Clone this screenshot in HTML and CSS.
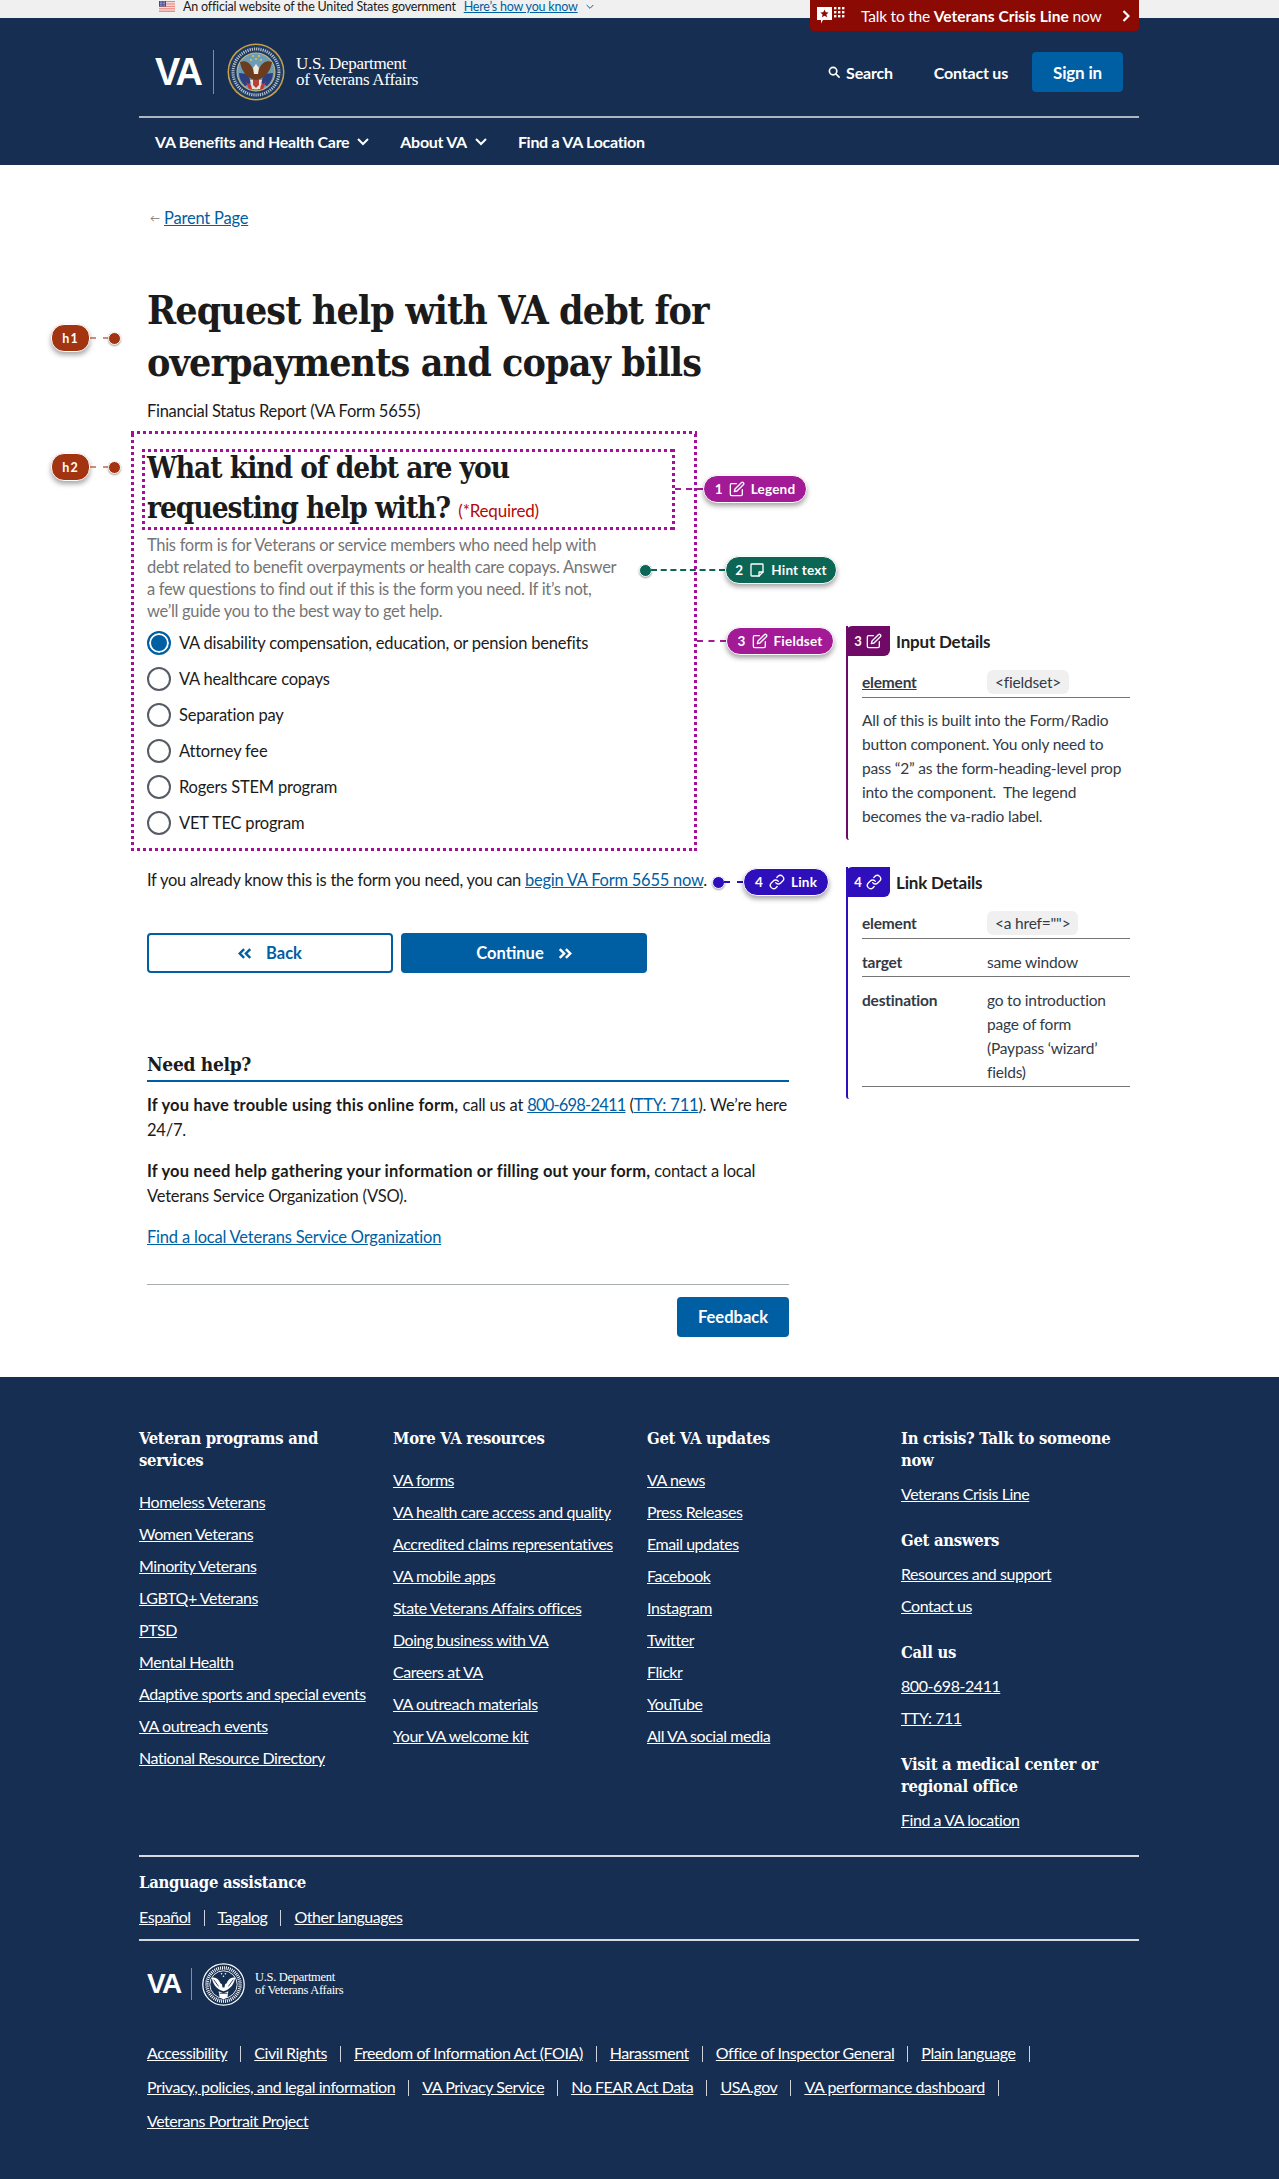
FILE: index.html
```html
<!DOCTYPE html>
<html lang="en">
<head>
  <meta charset="UTF-8">
  <title>Request help with VA debt</title>
  <link rel="stylesheet" href="styles.css">
</head>
<body>
  <svg class="sprite" width="0" height="0" aria-hidden="true">
    <symbol id="i-edit" viewBox="0 0 24 24"><path d="M11 4H4a2 2 0 0 0-2 2v14a2 2 0 0 0 2 2h14a2 2 0 0 0 2-2v-7"/><path d="M18.5 2.5a2.12 2.12 0 0 1 3 3L12 15l-4 1 1-4z"/></symbol>
    <symbol id="i-note" viewBox="0 0 24 24"><path d="M4 3h16a1 1 0 0 1 1 1v11l-6 6H4a1 1 0 0 1-1-1V4a1 1 0 0 1 1-1z"/><path d="M21 15h-6v6"/></symbol>
    <symbol id="i-link" viewBox="0 0 24 24"><path d="M10 13a5 5 0 0 0 7.54.54l3-3a5 5 0 0 0-7.07-7.07l-1.72 1.71"/><path d="M14 11a5 5 0 0 0-7.54-.54l-3 3a5 5 0 0 0 7.07 7.07l1.71-1.71"/></symbol>
    <symbol id="i-dbl-left" viewBox="0 0 16 12"><path d="M7 1 2 6l5 5M14 1 9 6l5 5"/></symbol>
    <symbol id="i-dbl-right" viewBox="0 0 16 12"><path d="m2 1 5 5-5 5M9 1l5 5-5 5"/></symbol>
    <symbol id="i-down" viewBox="0 0 12 8"><path d="m1 1 5 5 5-5"/></symbol>
  </svg>

  <div class="gov-banner">
    <div class="gov-inner">
      <svg class="flag" viewBox="0 0 16 11">
        <rect width="16" height="11" fill="#fff"/>
        <path d="M0 .5h16M0 2.2h16M0 3.9h16M0 5.6h16M0 7.3h16M0 9h16M0 10.6h16" stroke="#e2746a" stroke-width=".9"/>
        <rect width="7" height="5.6" fill="#3f4d8f"/>
        <path d="M1 1h5M1 2.6h5M1 4.2h5" stroke="#fff" stroke-width=".7" stroke-dasharray=".7 .7"/>
      </svg>
      <span>An official website of the United States government</span>
      <a href="#" class="gov-link">Here’s how you know</a>
      <svg class="gov-chev"><use href="#i-down"/></svg>
    </div>
  </div>

  <header class="site-header">
    <div class="header-wrap">
      <a href="#" class="crisis-tab">
        <svg class="crisis-icon" viewBox="0 0 30 17">
          <path d="M0 0h15v13H6l-2 3.500V13H0z" fill="#fff"/>
          <path d="m7.500 2.600 1.200 2.700 2.900.2-2.200 1.900.7 2.800-2.600-1.500-2.600 1.500.7-2.800-2.200-1.900 2.900-.2z" fill="#8b0a03"/>
          <g fill="#fff">
            <rect x="17" y="0" width="2.400" height="2.400"/><rect x="21" y="0" width="2.400" height="2.400"/><rect x="25" y="0" width="2.400" height="2.400"/>
            <rect x="17" y="4" width="2.400" height="2.400"/><rect x="21" y="4" width="2.400" height="2.400"/><rect x="25" y="4" width="2.400" height="2.400"/>
            <rect x="17" y="8" width="2.400" height="2.400"/><rect x="21" y="8" width="2.400" height="2.400"/><rect x="25" y="8" width="2.400" height="2.400"/>
          </g>
        </svg>
        <span class="crisis-text">Talk to the <b>Veterans Crisis Line</b> now</span>
        <svg class="crisis-chev" viewBox="0 0 8 12"><path d="m1.500 1 5 5-5 5"/></svg>
      </a>

      <div class="header-top">
        <a href="#" class="logo">
          <span class="logo-va">VA</span>
          <span class="logo-rule"></span>
          <svg class="seal" viewBox="0 0 58 58">
            <circle cx="29" cy="29" r="28.500" fill="#c5a04a"/>
            <circle cx="29" cy="29" r="27" fill="#1d3a63"/>
            <circle cx="29" cy="29" r="19.500" fill="#c9b67a"/>
            <circle cx="29" cy="29" r="18.500" fill="#6d9cb6"/>
            <circle cx="29" cy="29" r="23" fill="none" stroke="#b9c3cf" stroke-width="3" stroke-dasharray="1.200 1"/>
            <path d="M12 30l9 1 3 9-6 3a18 18 0 0 1-6-13zM46 30l-9 1-3 9 6 3a18 18 0 0 0 6-13z" fill="#2c3f80"/>
            <path d="M19 39l8 5 0 3-5-1zM39 39l-8 5 0 3 5-1z" fill="#c6343a"/>
            <path d="M23 37l12 0-2 9h-8z" fill="#e9e4da"/>
            <path d="M26 36l6 0 0 6-3 3-3-3z" fill="#b5423a"/>
            <path d="M13 19c5-2 10 0 13 7l3 1 3-1c3-7 8-9 13-7-1 7-5 14-12 17l-4 1-4-1c-7-3-11-10-12-17z" fill="#6b3d1e"/>
            <path d="M26 25l3-4 3 4-1 6h-4z" fill="#f0ebdd"/>
            <g fill="#e6c64e"><circle cx="26" cy="13" r="1"/><circle cx="32" cy="13" r="1"/><circle cx="29" cy="16" r="1"/><circle cx="24" cy="17" r="1"/><circle cx="34" cy="17" r="1"/></g>
          </svg>
          <span class="logo-text">U.S. Department<br>of Veterans Affairs</span>
        </a>
        <div class="header-actions">
          <a href="#" class="hdr-link search-link">
            <svg viewBox="0 0 14 14"><circle cx="5.500" cy="5.500" r="4"/><path d="m8.500 8.500 4 4"/></svg>
            Search
          </a>
          <a href="#" class="hdr-link">Contact us</a>
          <a href="#" class="sign-in">Sign in</a>
        </div>
      </div>

      <nav class="main-nav">
        <a href="#">VA Benefits and Health Care<svg class="nav-chev"><use href="#i-down"/></svg></a>
        <a href="#">About VA<svg class="nav-chev"><use href="#i-down"/></svg></a>
        <a href="#">Find a VA Location</a>
      </nav>
    </div>
  </header>

  <main class="page">
    <div class="form-col">
      <p class="parent-line"><span class="back-arrow">←</span><a href="#">Parent Page</a></p>
      <h1>Request help with VA debt for overpayments and copay bills</h1>
      <p class="subtitle">Financial Status Report (VA Form 5655)</p>

      <div class="fieldset dotted-box">
        <div class="legend dotted-box">
          <h2>What kind of debt are you requesting help with? <span class="required">(*Required)</span></h2>
        </div>
        <p class="hint">This form is for Veterans or service members who need help with<br>debt related to benefit overpayments or health care copays. Answer<br>a few questions to find out if this is the form you need. If it’s not,<br>we’ll guide you to the best way to get help.</p>
        <div class="radios">
          <label class="radio"><span class="dot-box checked"></span>VA disability compensation, education, or pension benefits</label>
          <label class="radio"><span class="dot-box"></span>VA healthcare copays</label>
          <label class="radio"><span class="dot-box"></span>Separation pay</label>
          <label class="radio"><span class="dot-box"></span>Attorney fee</label>
          <label class="radio"><span class="dot-box"></span>Rogers STEM program</label>
          <label class="radio"><span class="dot-box"></span>VET TEC program</label>
        </div>
      </div>

      <p class="already">If you already know this is the form you need, you can <a href="#">begin VA Form 5655 now</a>.</p>

      <div class="form-buttons">
        <button class="btn btn-outline"><svg class="dbl"><use href="#i-dbl-left"/></svg>Back</button>
        <button class="btn btn-solid">Continue<svg class="dbl"><use href="#i-dbl-right"/></svg></button>
      </div>

      <section class="need-help">
        <h3>Need help?</h3>
        <p><b>If you have trouble using this online form,</b> call us at <a href="#" class="tel">800-698-2411</a> (<a href="#">TTY: 711</a>). We’re here 24/7.</p>
        <p><b>If you need help gathering your information or filling out your form,</b> contact a local Veterans Service Organization (VSO).</p>
        <p><a href="#">Find a local Veterans Service Organization</a></p>
      </section>

      <div class="feedback-row"><button class="feedback">Feedback</button></div>
    </div>

    <aside class="details-col">
      <div class="panel panel-purple">
        <div class="panel-head">
          <span class="panel-tab">3<svg class="icn"><use href="#i-edit"/></svg></span>
          <h4>Input Details</h4>
        </div>
        <div class="panel-body">
          <div class="row row-first"><b class="underlined">element</b><span><code>&lt;fieldset&gt;</code></span></div>
          <p>All of this is built into the Form/Radio button component. You only need to pass “2” as the form-heading-level prop into the component.&nbsp; The legend becomes the va-radio label.</p>
        </div>
      </div>

      <div class="panel panel-blue">
        <div class="panel-head">
          <span class="panel-tab">4<svg class="icn"><use href="#i-link"/></svg></span>
          <h4>Link Details</h4>
        </div>
        <div class="panel-body">
          <div class="row row-first"><b>element</b><span><code>&lt;a href=""&gt;</code></span></div>
          <div class="row"><b>target</b><span>same window</span></div>
          <div class="row"><b>destination</b><span>go to introduction page of form (Paypass ‘wizard’ fields)</span></div>
        </div>
      </div>
    </aside>

    <div class="pin pin-h1"><span class="pill pill-rust">h1</span><i class="line"></i><i class="dot"></i></div>
    <div class="pin pin-h2"><span class="pill pill-rust">h2</span><i class="line"></i><i class="dot"></i></div>
    <div class="pin pin-legend"><i class="line"></i><span class="pill pill-magenta">1<svg class="icn"><use href="#i-edit"/></svg>Legend</span></div>
    <div class="pin pin-hint"><i class="dot"></i><i class="line"></i><span class="pill pill-teal">2<svg class="icn"><use href="#i-note"/></svg>Hint text</span></div>
    <div class="pin pin-fieldset"><i class="line"></i><span class="pill pill-magenta">3<svg class="icn"><use href="#i-edit"/></svg>Fieldset</span></div>
    <div class="pin pin-link"><i class="dot"></i><i class="line"></i><span class="pill pill-blue">4<svg class="icn"><use href="#i-link"/></svg>Link</span></div>
  </main>

  <footer class="site-footer">
    <div class="footer-wrap">
      <div class="footer-cols">
        <div>
          <h5>Veteran programs and services</h5>
          <ul>
            <li><a href="#">Homeless Veterans</a></li>
            <li><a href="#">Women Veterans</a></li>
            <li><a href="#">Minority Veterans</a></li>
            <li><a href="#">LGBTQ+ Veterans</a></li>
            <li><a href="#">PTSD</a></li>
            <li><a href="#">Mental Health</a></li>
            <li><a href="#">Adaptive sports and special events</a></li>
            <li><a href="#">VA outreach events</a></li>
            <li><a href="#">National Resource Directory</a></li>
          </ul>
        </div>
        <div>
          <h5>More VA resources</h5>
          <ul>
            <li><a href="#">VA forms</a></li>
            <li><a href="#">VA health care access and quality</a></li>
            <li><a href="#">Accredited claims representatives</a></li>
            <li><a href="#">VA mobile apps</a></li>
            <li><a href="#">State Veterans Affairs offices</a></li>
            <li><a href="#">Doing business with VA</a></li>
            <li><a href="#">Careers at VA</a></li>
            <li><a href="#">VA outreach materials</a></li>
            <li><a href="#">Your VA welcome kit</a></li>
          </ul>
        </div>
        <div>
          <h5>Get VA updates</h5>
          <ul>
            <li><a href="#">VA news</a></li>
            <li><a href="#">Press Releases</a></li>
            <li><a href="#">Email updates</a></li>
            <li><a href="#">Facebook</a></li>
            <li><a href="#">Instagram</a></li>
            <li><a href="#">Twitter</a></li>
            <li><a href="#">Flickr</a></li>
            <li><a href="#">YouTube</a></li>
            <li><a href="#">All VA social media</a></li>
          </ul>
        </div>
        <div class="col-stacked">
          <h5>In crisis? Talk to someone now</h5>
          <ul><li><a href="#">Veterans Crisis Line</a></li></ul>
          <h5>Get answers</h5>
          <ul>
            <li><a href="#">Resources and support</a></li>
            <li><a href="#">Contact us</a></li>
          </ul>
          <h5>Call us</h5>
          <ul>
            <li><a href="#">800-698-2411</a></li>
            <li><a href="#">TTY: 711</a></li>
          </ul>
          <h5>Visit a medical center or regional office</h5>
          <ul><li><a href="#">Find a VA location</a></li></ul>
        </div>
      </div>

      <div class="language">
        <h5>Language assistance</h5>
        <p><a href="#">Español</a><i class="sep"></i><a href="#">Tagalog</a><i class="sep"></i><a href="#">Other languages</a></p>
      </div>

      <div class="footer-bottom">
        <div class="footer-logo">
          <span class="logo-va">VA</span>
          <span class="logo-rule"></span>
          <svg class="seal-mono" viewBox="0 0 44 44">
            <circle cx="22" cy="22" r="21.200" fill="none" stroke="#fff" stroke-width="1.300"/>
            <circle cx="22" cy="22" r="17" fill="none" stroke="#fff" stroke-width="3.500" stroke-dasharray="1 1"/>
            <circle cx="22" cy="22" r="14" fill="none" stroke="#fff" stroke-width=".9"/>
            <path d="M10 15c4-1 7 1 9 6l3 1 3-1c2-5 5-7 9-6-1 6-4 10-9 13l-3 1-3-1c-5-3-8-7-9-13z" fill="#fff"/>
            <path d="M17 29l5 2 5-2-1 6-4 2-4-2z" fill="#fff"/>
            <path d="M20 20l2-3 2 3-1 5h-2z" fill="#162e51"/>
            <path d="M12 17l5 7M32 17l-5 7M18 31h8" stroke="#162e51" stroke-width=".9"/>
            <g fill="#fff"><circle cx="20" cy="11" r=".8"/><circle cx="24" cy="11" r=".8"/><circle cx="22" cy="13.500" r=".8"/></g>
          </svg>
          <span class="logo-text">U.S. Department<br>of Veterans Affairs</span>
        </div>
        <div class="bottom-links">
          <p><a href="#">Accessibility</a><i class="sep"></i><a href="#">Civil Rights</a><i class="sep"></i><a href="#">Freedom of Information Act (FOIA)</a><i class="sep"></i><a href="#">Harassment</a><i class="sep"></i><a href="#">Office of Inspector General</a><i class="sep"></i><a href="#">Plain language</a><i class="sep"></i></p>
          <p><a href="#">Privacy, policies, and legal information</a><i class="sep"></i><a href="#">VA Privacy Service</a><i class="sep"></i><a href="#">No FEAR Act Data</a><i class="sep"></i><a href="#">USA.gov</a><i class="sep"></i><a href="#">VA performance dashboard</a><i class="sep"></i></p>
          <p><a href="#">Veterans Portrait Project</a></p>
        </div>
      </div>
    </div>
  </footer>
</body>
</html>
```

FILE: styles.css
```css
* {
  box-sizing: border-box;
}

body {
  margin: 0;
  font-family: "Lato", "Noto Sans", sans-serif;
  font-size: 16px;
  letter-spacing: -0.2px;
  color: #1b1b1b;
  background: #fff;
}

a {
  color: #005ea2;
}

p {
  margin: 0;
}

.sprite {
  position: absolute;
}

/* top banner */
.gov-banner {
  height: 18px;
  background: #f0f0f0;
  font-size: 12.500px;
  line-height: 14px;
}

.gov-inner {
  width: 1000px;
  margin: 0 140px 0 139px;
  padding-left: 20px;
  display: flex;
  align-items: flex-start;
}

.flag {
  width: 16px;
  height: 11px;
  margin: 1px 8px 0 0;
}

.gov-link {
  margin-left: 8px;
}

.gov-chev {
  width: 8px;
  height: 6px;
  margin: 4px 0 0 8px;
  fill: none;
  stroke: #005ea2;
  stroke-width: 1.5;
}

/* header */
.site-header {
  height: 147px;
  background: #162e51;
  color: #fff;
}

.header-wrap {
  width: 1000px;
  margin: 0 140px 0 139px;
  position: relative;
}

.crisis-tab {
  position: absolute;
  top: -18px;
  right: 0;
  width: 329px;
  height: 31px;
  background: #8b0a03;
  border-radius: 0 0 4px 4px;
  color: #fff;
  text-decoration: none;
  display: flex;
  align-items: center;
  padding: 0 9px 0 7px;
  font-size: 15.500px;
}

.crisis-icon {
  width: 30px;
  height: 17px;
}

.crisis-text {
  margin-left: 14px;
  flex: 1;
}

.crisis-text b {
  letter-spacing: 0;
}

.crisis-chev {
  width: 8px;
  height: 12px;
  fill: none;
  stroke: #fff;
  stroke-width: 2.2;
}

.header-top {
  height: 100px;
  border-bottom: 2px solid #aeb5c0;
  display: flex;
  align-items: center;
  justify-content: space-between;
  padding: 10px 16px 0;
}

.logo {
  display: flex;
  align-items: center;
  color: #fff;
  text-decoration: none;
}

.logo-va {
  font-family: "Liberation Sans", sans-serif;
  font-weight: 700;
  font-size: 38px;
  line-height: 44px;
  letter-spacing: -2px;
  width: 58px;
}

.logo-rule {
  width: 1px;
  height: 44px;
  background: #7f8da3;
}

.seal {
  width: 58px;
  height: 58px;
  margin: 0 11px 0 13px;
}

.logo-text {
  font-family: "Liberation Serif", serif;
  font-size: 17px;
  line-height: 16px;
  letter-spacing: -0.3px;
}

.header-actions {
  display: flex;
  align-items: center;
}

.hdr-link {
  color: #fff;
  font-weight: 700;
  text-decoration: none;
  margin-right: 24px;
}

.search-link {
  margin-right: 41px;
  display: flex;
  align-items: center;
  gap: 5px;
}

.search-link svg {
  width: 13px;
  height: 13px;
  fill: none;
  stroke: #fff;
  stroke-width: 1.8;
}

.sign-in {
  width: 91px;
  height: 40px;
  background: #005ea2;
  border-radius: 4px;
  color: #fff;
  font-weight: 700;
  font-size: 17px;
  text-decoration: none;
  display: flex;
  align-items: center;
  justify-content: center;
}

.main-nav {
  height: 47px;
  padding-left: 16px;
  display: flex;
  align-items: center;
  gap: 31px;
}

.main-nav a {
  color: #fff;
  font-weight: 700;
  font-size: 16px;
  letter-spacing: -0.3px;
  text-decoration: none;
  display: flex;
  align-items: center;
}

.nav-chev {
  width: 12px;
  height: 8px;
  margin-left: 8px;
  fill: none;
  stroke: #fff;
  stroke-width: 2;
}

/* main content */
.page {
  position: relative;
  display: flex;
  height: 1212px;
}

.form-col {
  width: 642px;
  margin-left: 147px;
  padding-top: 41px;
  font-size: 16.500px;
}

.parent-line {
  line-height: 24px;
  display: flex;
  align-items: center;
  margin-left: 3px;
}

.back-arrow {
  color: #757575;
  font-size: 10px;
  width: 14px;
}

h1 {
  font-family: "DejaVu Serif Condensed", "DejaVu Serif", serif;
  font-stretch: condensed;
  font-weight: 700;
  font-size: 39px;
  line-height: 52px;
  letter-spacing: -0.9px;
  margin: 54px 0 11px;
  width: 580px;
}

.subtitle {
  line-height: 24px;
  letter-spacing: -0.3px;
}

/* square dots, the browser's dotted border draws them round */
.dotted-box {
  --dots: #a30f96;
  background-image:
    repeating-linear-gradient(90deg, var(--dots) 0 3px, transparent 3px 6px),
    repeating-linear-gradient(90deg, var(--dots) 0 3px, transparent 3px 6px),
    repeating-linear-gradient(0deg, var(--dots) 0 3px, transparent 3px 6px),
    repeating-linear-gradient(0deg, var(--dots) 0 3px, transparent 3px 6px);
  background-size: 100% 3px, 100% 3px, 3px 100%, 3px 100%;
  background-position: top left, bottom left, top left, top right;
  background-repeat: no-repeat;
}

.fieldset {
  margin: 8px 0 0 -16px;
  width: 566px;
  height: 420px;
  padding: 18px 0 0 16px;
}

.legend {
  margin-left: -5px;
  padding-left: 5px;
  width: 533px;
  height: 81px;
}

h2 {
  font-family: "DejaVu Serif Condensed", "DejaVu Serif", serif;
  font-stretch: condensed;
  font-weight: 700;
  font-size: 29.500px;
  line-height: 40px;
  letter-spacing: -1px;
  margin: 0;
  padding-top: 0;
  width: 400px;
  position: relative;
  top: -1px;
}

.required {
  font-family: "Lato", sans-serif;
  font-weight: 400;
  font-size: 17px;
  letter-spacing: -0.2px;
  color: #b50909;
  white-space: nowrap;
  position: relative;
  top: -1px;
}

.hint {
  color: #757575;
  line-height: 22px;
  margin-top: 4px;
  letter-spacing: -0.3px;
}

.radios {
  margin-top: 3px;
}

.radio {
  display: flex;
  align-items: center;
  height: 36px;
  gap: 8px;
}

.dot-box {
  width: 24px;
  height: 24px;
  border-radius: 50%;
  border: 2px solid #565c65;
  background: #fff;
}

.dot-box.checked {
  border-color: #005ea2;
  background: #005ea2;
  box-shadow: inset 0 0 0 2px #fff;
}

.already {
  margin-top: 17px;
  line-height: 24px;
  letter-spacing: -0.25px;
}

.form-buttons {
  display: flex;
  gap: 8px;
  margin-top: 41px;
}

.btn {
  width: 246px;
  height: 40px;
  border-radius: 4px;
  font: 700 16.500px "Lato", sans-serif;
  display: flex;
  align-items: center;
  justify-content: center;
  gap: 14px;
  cursor: pointer;
}

.btn-outline {
  background: #fff;
  color: #005ea2;
  border: 2px solid #005ea2;
}

.btn-solid {
  background: #005ea2;
  color: #fff;
  border: 0;
}

.dbl {
  width: 14px;
  height: 11px;
  fill: none;
  stroke: currentColor;
  stroke-width: 2.800;
}

.need-help {
  margin-top: 77px;
}

h3 {
  font-family: "DejaVu Serif Condensed", "DejaVu Serif", serif;
  font-stretch: condensed;
  font-size: 19px;
  line-height: 28px;
  letter-spacing: -0.3px;
  margin: 0 0 11px;
  border-bottom: 2px solid #005ea2;
  padding-bottom: 2px;
}

.need-help p {
  line-height: 25px;
  margin-bottom: 16px;
}

.need-help b {
  letter-spacing: 0.2px;
}

.tel {
  letter-spacing: -0.8px;
}

.feedback-row {
  margin-top: 34px;
  border-top: 1px solid #a9aeb1;
  padding-top: 12px;
  display: flex;
  justify-content: flex-end;
}

.feedback {
  width: 112px;
  height: 40px;
  background: #005ea2;
  color: #fff;
  border: 0;
  border-radius: 4px;
  font: 700 16.500px "Lato", sans-serif;
}

/* right side detail panels */
.details-col {
  width: 284px;
  margin-left: 57px;
  padding-top: 461px;
  font-size: 15.500px;
  color: #323a45;
}

.panel {
  border-left: 2px solid;
  border-radius: 0 0 0 3px;
  padding-bottom: 12px;
  margin-bottom: 27px;
}

.panel-purple {
  border-color: #6f0a66;
}

.panel-blue {
  border-color: #2f0fbb;
}

.panel-head {
  display: flex;
  align-items: center;
  height: 30px;
  margin-left: -2px;
}

.panel-tab {
  width: 44px;
  height: 30px;
  border-radius: 6px 0 6px 0;
  color: #fff;
  font-weight: 700;
  font-size: 13px;
  display: flex;
  align-items: center;
  justify-content: center;
  gap: 4px;
}

.panel-purple .panel-tab {
  background: #6f0a66;
}

.panel-blue .panel-tab {
  background: #2f0fbb;
}

h4 {
  margin: 0 0 0 6px;
  font-size: 17px;
  color: #212121;
}

.panel-body {
  margin-left: 14px;
  line-height: 24px;
}

.row {
  display: grid;
  grid-template-columns: 125px 1fr;
  padding: 11px 0 2px;
  border-bottom: 1px solid #757575;
}

.row-first {
  padding-top: 14px;
  padding-bottom: 3px;
}

.underlined {
  text-decoration: underline;
}

.panel-body p {
  margin-top: 10px;
}

code {
  font-family: inherit;
  background: #f0f0f0;
  border-radius: 6px;
  padding: 3px 8px;
}

/* annotation pins */
.pin {
  position: absolute;
  display: flex;
  align-items: center;
  height: 28px;
}

.pill {
  height: 28px;
  border-radius: 14px;
  border: 1px solid #fff;
  box-shadow: 0 3px 5px rgba(0, 0, 0, 0.35);
  color: #fff;
  font-weight: 700;
  font-size: 13.500px;
  letter-spacing: 0.2px;
  display: flex;
  align-items: center;
  justify-content: center;
  gap: 6px;
  flex: none;
}

.icn {
  width: 16px;
  height: 16px;
  fill: none;
  stroke: #fff;
  stroke-width: 2;
  stroke-linecap: round;
  stroke-linejoin: round;
}

.line {
  flex: 1;
  height: 0;
  border-top: 2px dashed;
}

.dot {
  width: 11px;
  height: 11px;
  border-radius: 50%;
  flex: none;
  box-shadow: 0 1px 2px rgba(0, 0, 0, 0.4);
  border: 1px solid #fff;
  box-sizing: content-box;
  margin: 0 -1px;
}

.pill-rust {
  background: #a23412;
  width: 39px;
  border-radius: 13px;
  font-size: 12.500px;
  letter-spacing: 1.200px;
}

.pill-magenta {
  background: #a31a96;
}

.pill-teal {
  background: #0b6655;
}

.pill-blue {
  background: #2f0fbb;
}

.pin-h1,
.pin-h2 {
  left: 51px;
  width: 69px;
  color: rgba(162, 52, 18, 0.55);
}

.pin-h1 .dot,
.pin-h2 .dot {
  background: #a23412;
}

.pin-h1 {
  top: 159px;
}

.pin-h2 {
  top: 288px;
}

.pin-legend {
  left: 675px;
  top: 310px;
  width: 132px;
  color: #a31a96;
}

.pin-legend .pill {
  width: 104px;
}

.pin-hint {
  left: 640px;
  top: 391px;
  width: 197px;
  color: #0b6655;
}

.pin-hint .dot {
  background: #0b6655;
}

.pin-hint .pill {
  width: 112px;
}

.pin-fieldset {
  left: 697px;
  top: 462px;
  width: 137px;
  color: #a31a96;
}

.pin-fieldset .pill {
  width: 108px;
}

.pin-link {
  left: 713px;
  top: 703px;
  width: 116px;
  color: #2f0fbb;
}

.pin-link .dot {
  background: #2f0fbb;
}

.pin-link .pill {
  width: 86px;
}

/* footer */
.site-footer {
  background: #162e51;
  color: #fff;
  height: 802px;
  font-size: 16px;
}

.site-footer a {
  color: #fff;
  letter-spacing: -0.45px;
}

.footer-wrap {
  width: 1000px;
  margin: 0 140px 0 139px;
  padding-top: 51px;
}

.footer-cols {
  display: grid;
  grid-template-columns: repeat(4, 254px);
  height: 429px;
  border-bottom: 2px solid #d6d9de;
}

h5 {
  font-family: "DejaVu Serif Condensed", "DejaVu Serif", serif;
  font-stretch: condensed;
  font-size: 16.500px;
  line-height: 22px;
  letter-spacing: -0.3px;
  margin: 0 30px 18px 0;
}

ul {
  list-style: none;
  margin: 0;
  padding: 0;
}

li {
  line-height: 24px;
  margin-bottom: 8px;
}

.col-stacked h5 {
  margin: 0 0 10px;
  max-width: 215px;
}

.col-stacked ul {
  margin-bottom: 24px;
}

.col-stacked ul:last-child {
  margin-bottom: 0;
}

.language {
  padding-top: 15px;
  height: 84px;
  border-bottom: 2px solid #d6d9de;
}

.language h5 {
  margin-bottom: 11px;
}

.language p,
.bottom-links p {
  line-height: 24px;
}

.sep {
  display: inline-block;
  width: 1px;
  height: 16px;
  background: #cfd3d9;
  margin: 0 13px;
  vertical-align: -3px;
}

.footer-bottom {
  padding: 21px 8px 0;
}

.footer-logo {
  display: flex;
  align-items: center;
  height: 44px;
}

.footer-logo .logo-va {
  font-size: 28px;
  line-height: 32px;
  letter-spacing: -1.5px;
  width: 44px;
}

.footer-logo .logo-rule {
  height: 32px;
}

.seal-mono {
  width: 43px;
  height: 43px;
  margin: 0 10px;
}

.footer-logo .logo-text {
  font-size: 12.500px;
  line-height: 13px;
}

.bottom-links {
  margin-top: 35px;
}

.bottom-links p {
  margin-bottom: 10px;
}
```
